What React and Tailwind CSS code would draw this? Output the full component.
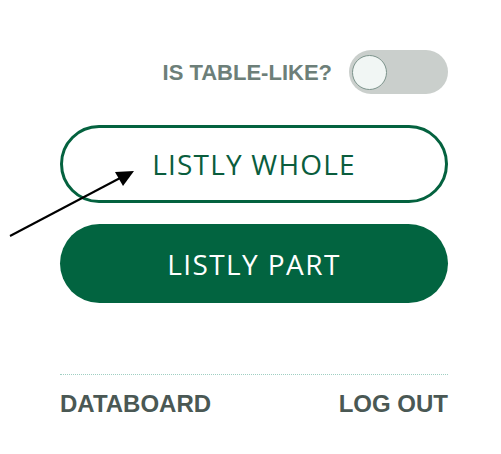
export default function App() {
  return (
    <div className="relative min-h-[454px] w-[501px] bg-white" style={{ fontFamily: '"Liberation Sans", Arial, sans-serif' }}>
      <div className="ml-[60px] w-[388px] pt-[50px]">
        <div className="flex items-center justify-end gap-[17px]">
          <span className="text-[22px] font-bold text-[#6d7f79]">IS TABLE-LIKE?</span>
          <button className="flex h-[44px] w-[99px] items-center rounded-full bg-[#cacfcc] px-[3px]">
            <span className="h-[35px] w-[35px] rounded-full border-[1.5px] border-[#7d948c] bg-[#f1f6f4]" />
          </button>
        </div>

        <button
          className="mt-[31px] flex h-[78px] w-full items-center justify-center rounded-full border-[3px] border-[#04623f] bg-white text-[28px] tracking-[1.2px] text-[#0a5d3d]"
          style={{ fontFamily: '"Open Sans", sans-serif' }}
        >
          LISTLY WHOLE
        </button>

        <button
          className="mt-[21px] flex h-[79px] w-full items-center justify-center rounded-full bg-[#026440] text-[28px] tracking-[1.4px] text-white"
          style={{ fontFamily: '"Open Sans", sans-serif' }}
        >
          LISTLY PART
        </button>

        <div className="mt-[71px] border-t border-dotted border-[#9fcfc2]" />

        <div className="mt-[17px] flex items-center justify-between text-[24px] leading-[24px] font-bold text-[#4a5854]">
          <span>DATABOARD</span>
          <span>LOG OUT</span>
        </div>
      </div>

      <svg className="absolute left-0 top-0" width="501" height="454" viewBox="0 0 501 454">
        <line x1="10" y1="236" x2="122" y2="177" stroke="#000" strokeWidth="2" />
        <polygon points="134,171 115,172 123,186" fill="#000" />
      </svg>
    </div>
  )
}
